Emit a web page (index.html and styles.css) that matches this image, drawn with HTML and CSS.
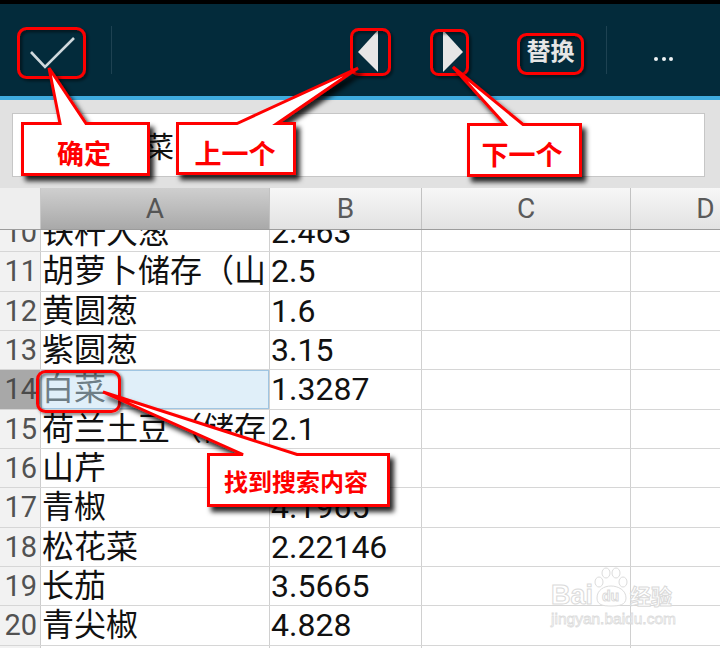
FILE: index.html
```html
<!DOCTYPE html>
<html lang="zh">

<head>
    <meta charset="UTF-8">
    <meta name="viewport" content="width=device-width, initial-scale=1.0">
    <title>查找和替换</title>
    <link rel="stylesheet" href="styles.css">
</head>

<body>
    <div class="status"></div>

    <!-- 顶部工具栏 -->
    <div class="toolbar">
        <div class="tb ok">
            <svg width="48" height="40" viewBox="0 0 48 40">
                <polyline points="3,22 17,37 46,8" fill="none" stroke="#cfd8dc" stroke-width="2.6" />
            </svg>
        </div>
        <span class="sep"></span>
        <div class="tb-right">
            <div class="tb nav">
                <svg width="22" height="46" viewBox="0 0 22 46">
                    <polygon points="1,25 21,3 21,45" fill="#e6e6e6" />
                </svg>
            </div>
            <div class="tb nav">
                <svg width="22" height="46" viewBox="0 0 22 46">
                    <polygon points="1,3 1,45 21,25" fill="#e6e6e6" />
                </svg>
            </div>
            <div class="tb replace">替换</div>
            <span class="sep"></span>
            <div class="tb more"><i></i><i></i><i></i></div>
        </div>
    </div>
    <div class="accent"></div>

    <!-- 搜索框 -->
    <div class="searchbar">
        <div class="search-input">白菜</div>
    </div>

    <!-- 表格 -->
    <div class="sheet">
        <div class="sheet-head">
            <div class="corner"></div>
            <div class="col-head active">A</div>
            <div class="col-head">B</div>
            <div class="col-head">C</div>
            <div class="col-head">D</div>
        </div>
        <div class="sheet-body">
            <div class="rows">
                <div class="row"><div class="rh">10</div><div class="cell">铁杆大葱</div><div class="cell">2.463</div><div class="cell"></div><div class="cell"></div></div>
                <div class="row"><div class="rh">11</div><div class="cell">胡萝卜储存（山</div><div class="cell">2.5</div><div class="cell"></div><div class="cell"></div></div>
                <div class="row"><div class="rh">12</div><div class="cell">黄圆葱</div><div class="cell">1.6</div><div class="cell"></div><div class="cell"></div></div>
                <div class="row"><div class="rh">13</div><div class="cell">紫圆葱</div><div class="cell">3.15</div><div class="cell"></div><div class="cell"></div></div>
                <div class="row"><div class="rh selected">14</div><div class="cell found">白菜</div><div class="cell">1.3287</div><div class="cell"></div><div class="cell"></div></div>
                <div class="row"><div class="rh">15</div><div class="cell">荷兰土豆（储存</div><div class="cell">2.1</div><div class="cell"></div><div class="cell"></div></div>
                <div class="row"><div class="rh">16</div><div class="cell">山芹</div><div class="cell">6.4</div><div class="cell"></div><div class="cell"></div></div>
                <div class="row"><div class="rh">17</div><div class="cell">青椒</div><div class="cell">4.1965</div><div class="cell"></div><div class="cell"></div></div>
                <div class="row"><div class="rh">18</div><div class="cell">松花菜</div><div class="cell">2.22146</div><div class="cell"></div><div class="cell"></div></div>
                <div class="row"><div class="rh">19</div><div class="cell">长茄</div><div class="cell">3.5665</div><div class="cell"></div><div class="cell"></div></div>
                <div class="row"><div class="rh">20</div><div class="cell">青尖椒</div><div class="cell">4.828</div><div class="cell"></div><div class="cell"></div></div>
                <div class="row"><div class="rh">21</div><div class="cell">圆茄</div><div class="cell">3.2</div><div class="cell"></div><div class="cell"></div></div>
            </div>
        </div>
    </div>

    <!-- 水印 -->
    <div class="watermark">
        <div class="wm-logo">
            <span class="wm-bai">Bai</span>
            <span class="wm-paw">
                <svg width="36" height="40" viewBox="0 0 36 40">
                    <g fill="#fff" stroke="#dcdcdc" stroke-width="1">
                        <ellipse cx="6" cy="15" rx="4" ry="5" />
                        <ellipse cx="13" cy="6" rx="4" ry="5" />
                        <ellipse cx="23" cy="6" rx="4" ry="5" />
                        <ellipse cx="30" cy="15" rx="4" ry="5" />
                        <path d="M4,31 C4,23 11,19 18,19 C25,19 33,23 33,31 C33,38 26,39 18,39 C10,39 4,38 4,31 Z" />
                    </g>
                </svg>
                <b>du</b>
            </span>
            <span class="wm-jy">经验</span>
        </div>
        <div class="wm-url">jingyan.baidu.com</div>
    </div>

    <!-- 标注 -->
    <svg class="notes" width="720" height="648" viewBox="0 0 720 648">
        <defs>
            <filter id="soft" x="-20%" y="-20%" width="140%" height="140%">
                <feDropShadow dx="2" dy="2" stdDeviation="1.5" flood-color="#000" flood-opacity="0.55" />
            </filter>
            <filter id="drop" x="-20%" y="-20%" width="140%" height="150%">
                <feDropShadow dx="4" dy="5" stdDeviation="2.5" flood-color="#000" flood-opacity="0.85" />
            </filter>
        </defs>
        <g class="ring" filter="url(#soft)">
            <rect x="18.5" y="28.5" width="66" height="49" rx="8" />
            <rect x="351.5" y="29.5" width="38" height="45" rx="7" />
            <rect x="431.5" y="30.5" width="36" height="44" rx="7" />
            <rect x="518.5" y="34.5" width="64" height="39" rx="8" />
            <rect x="37.5" y="371.5" width="82" height="40" rx="8" />
        </g>
        <g class="callout" filter="url(#drop)">
            <path d="M22.5,123.5 H60 L49,68 L86,123.5 H148.5 V174.5 H22.5 Z" />
            <path d="M177.5,123.5 H237 L358,68 L277,123.5 H294.5 V173.5 H177.5 Z" />
            <path d="M468.5,124.5 H505 L453,67 L523,124.5 H580.5 V175.5 H468.5 Z" />
            <path d="M208.5,454.5 H243 L103,392 L297,454.5 H388.5 V505.5 H208.5 Z" />
        </g>
        <text class="note-text" x="84" y="152">确定</text>
        <text class="note-text" x="235" y="152">上一个</text>
        <text class="note-text" x="522" y="153">下一个</text>
        <text class="note-text small" x="296" y="480">找到搜索内容</text>
    </svg>
</body>

</html>
```

FILE: styles.css
```css
body {
    margin: 0;
    width: 720px;
    height: 648px;
    overflow: hidden;
    position: relative;
    background-color: #fff;
    font-family: Roboto, "Noto Sans CJK SC", sans-serif;
}

.status {
    height: 4px;
    background-color: #000;
}

/*工具栏*/
.toolbar {
    height: 92px;
    background-color: #032b3b;
    display: flex;
    align-items: center;
}

.tb {
    display: flex;
    align-items: center;
    justify-content: center;
    height: 100%;
}

.tb.ok {
    width: 104px;
}

.sep {
    width: 1px;
    height: 48px;
    background-color: #1e4252;
}

.toolbar > .sep {
    margin-left: 7px;
}

.tb-right {
    margin-left: auto;
    display: flex;
    align-items: center;
    height: 100%;
}

.tb.nav {
    width: 85px;
}

.tb.replace {
    width: 111px;
    color: #e6e6e6;
    font-family: "Noto Sans CJK SC", sans-serif;
    font-weight: bold;
    font-size: 24px;
    padding-bottom: 2px;
    box-sizing: border-box;
}

.tb.more {
    width: 113px;
    gap: 3.5px;
    padding-top: 18px;
    box-sizing: border-box;
}

.tb.more i {
    width: 4px;
    height: 4px;
    border-radius: 50%;
    background-color: #eef2f4;
}

.accent {
    height: 4px;
    background-color: #3fabde;
}

/*搜索框*/
.searchbar {
    height: 88px;
    box-sizing: border-box;
    padding: 13px 15px 0 12px;
    background-color: #e1e1e1;
}

.search-input {
    height: 64px;
    box-sizing: border-box;
    border: 1px solid #c6c6c6;
    background-color: #fff;
    padding-left: 103px;
    font-family: "Noto Sans CJK SC", sans-serif;
    font-size: 29px;
    line-height: 62px;
    color: #111;
}

/*表格*/
.sheet {
    overflow: hidden;
}

.sheet-head,
.row {
    display: grid;
    grid-template-columns: 41px 229px 152px 209px 150px;
}

.sheet-head {
    height: 42px;
    box-sizing: border-box;
    border-bottom: 1px solid #9c9c9c;
}

.corner {
    background-color: #eeeeee;
    border-right: 1px solid #c8c8c8;
}

.col-head {
    background: linear-gradient(#f7f7f7, #e2e2e2);
    border-right: 1px solid #c2c2c2;
    text-align: center;
    font-size: 28px;
    line-height: 41px;
    color: #5a5a5a;
}

.col-head.active {
    background: linear-gradient(#cfcfcf, #a9a9a9);
    color: #555;
}

.sheet-body {
    height: 418px;
    overflow: hidden;
}

.rows {
    margin-top: -17px;
}

.row {
    height: 39.33px;
    box-sizing: border-box;
    border-bottom: 1px solid #d6d6d6;
}

.rh {
    background-color: #f2f2f2;
    border-right: 1px solid #cdcdcd;
    text-align: right;
    padding-right: 3px;
    font-size: 29px;
    line-height: 39px;
    color: #525252;
    overflow: hidden;
}

.rh.selected {
    background-color: #a8a8a8;
    color: #4a4a4a;
}

.cell {
    border-right: 1px solid #d0d0d0;
    padding: 1px 0 0 1px;
    font-size: 32px;
    line-height: 37px;
    color: #111;
    white-space: nowrap;
    overflow: hidden;
}

.cell.found {
    background-color: #e0eff9;
    box-shadow: inset 0 0 0 1px #9fc5e2;
    color: #6e7e86;
}

/*水印*/
.watermark {
    position: absolute;
    left: 551px;
    top: 566px;
    width: 132px;
}

.wm-logo {
    display: flex;
    align-items: flex-end;
    height: 42px;
}

.wm-bai,
.wm-jy,
.wm-paw b {
    font-family: "Liberation Sans", sans-serif;
    font-weight: bold;
    color: #fff;
    -webkit-text-stroke: 1px #dadada;
}

.wm-bai {
    font-size: 27px;
    line-height: 26px;
}

.wm-paw {
    position: relative;
    width: 37px;
    height: 42px;
}

.wm-paw svg {
    position: absolute;
    left: 0;
    top: 1px;
}

.wm-paw b {
    position: absolute;
    left: 9px;
    top: 22px;
    font-size: 14px;
}

.wm-jy {
    font-family: "Noto Sans CJK SC", sans-serif;
    font-size: 21px;
    line-height: 26px;
}

.wm-url {
    font-family: "Liberation Sans", sans-serif;
    font-size: 15.5px;
    color: #fff;
    -webkit-text-stroke: 0.8px #dcdcdc;
    margin-top: 2px;
}

/*标注层*/
.notes {
    position: absolute;
    left: 0;
    top: 0;
    pointer-events: none;
}

.ring rect {
    fill: none;
    stroke: #f00;
    stroke-width: 3;
}

.callout path {
    fill: #fff;
    stroke: #f00;
    stroke-width: 3;
}

.note-text {
    font-family: "Noto Sans CJK SC", sans-serif;
    font-weight: bold;
    font-size: 27px;
    fill: #f00;
    text-anchor: middle;
    dominant-baseline: central;
}

.note-text.small {
    font-size: 24px;
}
```
